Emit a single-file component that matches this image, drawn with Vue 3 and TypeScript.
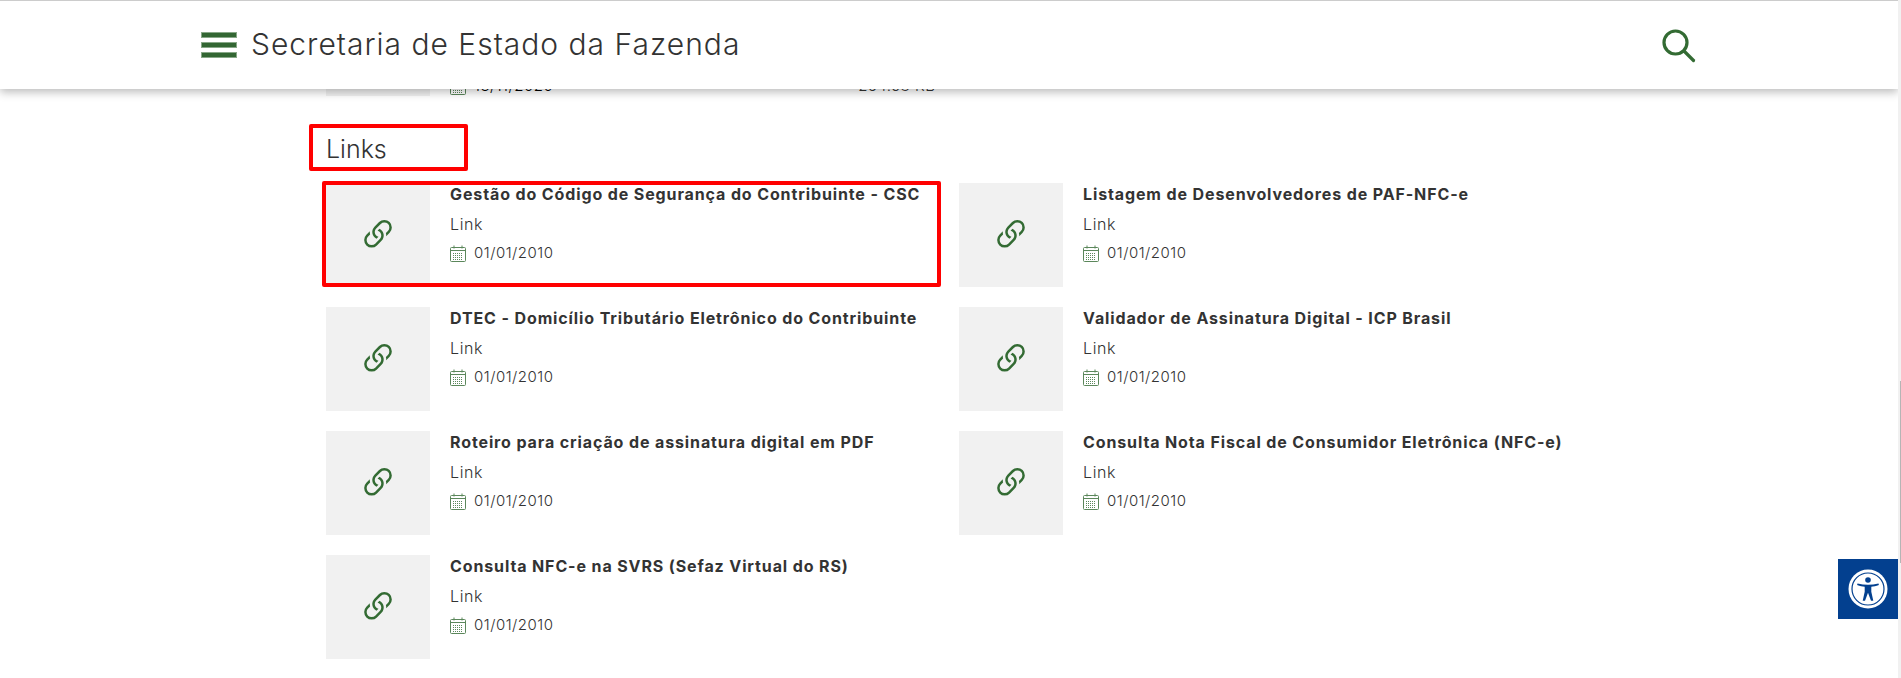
<script setup lang="ts">
const links = [
  'Gestão do Código de Segurança do Contribuinte - CSC',
  'Listagem de Desenvolvedores de PAF-NFC-e',
  'DTEC - Domicílio Tributário Eletrônico do Contribuinte',
  'Validador de Assinatura Digital - ICP Brasil',
  'Roteiro para criação de assinatura digital em PDF',
  'Consulta Nota Fiscal de Consumidor Eletrônica (NFC-e)',
  'Consulta NFC-e na SVRS (Sefaz Virtual do RS)',
]
</script>

<template>
  <div class="page">
    <main class="main">
      <header class="topbar">
        <div class="burger"><span /><span /><span /></div>
        <h1 class="site-title">Secretaria de Estado da Fazenda</h1>
        <svg class="search" width="34" height="34" viewBox="0 0 34 34" fill="none" stroke="#336b33" stroke-linecap="round">
          <circle cx="13.5" cy="13.5" r="11.5" stroke-width="3.2" />
          <path d="M22 22l9.500 9.500" stroke-width="3.2" />
        </svg>
      </header>

      <div class="content">
        <!-- linha anterior, quase toda sob o topo -->
        <div class="peek">
          <div class="thumb" />
          <div class="peek-info">
            <div class="date">
              <svg class="cal" width="16" height="17" viewBox="0 0 16 17" fill="none" stroke="#5b875b">
                <rect x="0.5" y="2.5" width="15" height="14" rx="1" />
                <path d="M0.5 5.5h15M4 0.5v3M12 0.5v3" />
                <path d="M3 8.5h10M3 10.5h10M3 12.5h10M3 14.5h10" stroke-dasharray="1 1" />
              </svg>
              13/11/2020
            </div>
            <span class="size">254.68 KB</span>
          </div>
        </div>

        <h2 class="section-title">Links</h2>

        <div class="grid">
          <a v-for="(title, i) in links" :key="title" class="card" :class="{ marked: i === 0 }">
            <div class="thumb">
              <svg width="40" height="40" viewBox="0 0 16 16" fill="#336b33">
                <path d="M4.715 6.542 3.343 7.914a3 3 0 1 0 4.243 4.243l1.828-1.829A3 3 0 0 0 8.586 5.500L8 6.086a1 1 0 0 0-.154.199 2 2 0 0 1 .861 3.337L6.880 11.450a2 2 0 1 1-2.830-2.830l.793-.792a4 4 0 0 1-.128-1.287z" />
                <path d="M6.586 4.672A3 3 0 0 0 7.414 9.500l.775-.776a2 2 0 0 1-.896-3.346L9.120 3.550a2 2 0 1 1 2.830 2.830l-.793.792c.112.420.155.855.128 1.287l1.372-1.372a3 3 0 1 0-4.243-4.243z" />
              </svg>
            </div>
            <div class="info">
              <div class="title">{{ title }}</div>
              <div class="type">Link</div>
              <div class="date">
                <svg class="cal" width="16" height="17" viewBox="0 0 16 17" fill="none" stroke="#5b875b">
                  <rect x="0.5" y="2.5" width="15" height="14" rx="1" />
                  <path d="M0.5 5.5h15M4 0.5v3M12 0.5v3" />
                  <path d="M3 8.5h10M3 10.5h10M3 12.5h10M3 14.5h10" stroke-dasharray="1 1" />
                </svg>
                01/01/2010
              </div>
            </div>
          </a>
        </div>
      </div>

      <button class="access" aria-label="Acessibilidade">
        <svg width="40" height="40" viewBox="0 0 40 40">
          <circle cx="20" cy="20" r="19.5" fill="#fff" />
          <circle cx="20" cy="20" r="16" fill="none" stroke="#03408f" stroke-width="1.2" />
          <circle cx="20" cy="11" r="2.8" fill="#03408f" />
          <path d="M9.500 14.500c3.500.8 7 1.200 10.500 1.200s7-.4 10.500-1.200l.4 1.400c-2.900 1-5.400 1.500-7.600 1.800v5l2 9h-2.300l-3-8-3 8h-2.300l2-9v-5c-2.200-.3-4.700-.8-7.600-1.800z" fill="#03408f" />
        </svg>
      </button>
    </main>
    <aside class="scrollbar"><div class="scroll-thumb" /></aside>
  </div>
</template>

<style scoped>
.page {
  display: flex;
  height: 678px;
  overflow: hidden;
  font-family: Inter, "Open Sans", sans-serif;
  background: #fff;
}

.main {
  position: relative;
  flex: 1;
  min-width: 0;
  overflow: hidden;
}

.scrollbar {
  position: relative;
  width: 3px;
  background: #f1f1f1;
}
.scroll-thumb {
  position: absolute;
  top: 381px;
  right: 0;
  width: 1px;
  height: 182px;
  background: #b5b5b5;
}

/* --- topo --- */
.topbar {
  position: absolute;
  top: 0;
  left: 0;
  right: 0;
  z-index: 5;
  box-sizing: border-box;
  height: 89px;
  display: flex;
  align-items: center;
  padding-left: 201px;
  padding-right: 202px;
  background: #fff;
  border-top: 1px solid #ccc;
  box-shadow: 0 3px 9px rgba(0, 0, 0, 0.28);
}

.burger {
  display: flex;
  flex-direction: column;
  gap: 4px;
  width: 36px;
  margin-right: 14px;
}
.burger span {
  box-sizing: border-box;
  height: 6px;
  background: #336633;
  border: 1px solid #88a888;
}

.site-title {
  flex: 1;
  margin: 0 0 2px;
  font-size: 30px;
  font-weight: 300;
  letter-spacing: 1px;
  color: #333;
}

.search {
  margin-top: 2px;
}

/* --- conteudo --- */
.content {
  margin-top: -8px;
  padding-left: 326px;
}

.thumb {
  flex: none;
  display: flex;
  align-items: center;
  justify-content: center;
  width: 104px;
  height: 104px;
  background: #f1f1f1;
}

.peek {
  display: flex;
  height: 104px;
}
.peek-info {
  display: flex;
  align-items: flex-end;
  margin-bottom: -1px;
  padding-left: 20px;
}
.size {
  margin-left: 305px;
  font-size: 15px;
  font-weight: 300;
  letter-spacing: 0.5px;
  line-height: 22px;
  color: #333;
}

.section-title {
  position: relative;
  box-sizing: border-box;
  height: 47px;
  margin: 28px 0 12px;
  font-size: 25px;
  font-weight: 300;
  line-height: 50px;
  color: #333;
}
.section-title::after {
  content: '';
  position: absolute;
  top: 0;
  left: -17px;
  width: 159px;
  height: 47px;
  box-sizing: border-box;
  border: 4px solid #f00;
  border-radius: 2px;
}

.grid {
  display: grid;
  grid-template-columns: 617px 617px;
  column-gap: 16px;
  row-gap: 20px;
}

.card {
  position: relative;
  display: flex;
  height: 104px;
}
.card.marked::after {
  content: '';
  position: absolute;
  top: -2px;
  left: -4px;
  right: 2px;
  bottom: 0;
  border: 4px solid #f00;
  border-radius: 2px;
}

.info {
  min-width: 0;
  padding-left: 20px;
  color: #333;
}
.title {
  font-size: 16px;
  font-weight: 700;
  letter-spacing: 0.88px;
  line-height: 22px;
  white-space: nowrap;
}
.type {
  margin-top: 8px;
  font-size: 16px;
  font-weight: 300;
  letter-spacing: 0.6px;
  line-height: 22px;
}
.date {
  display: flex;
  align-items: center;
  gap: 8px;
  margin-top: 7px;
  font-size: 15px;
  font-weight: 300;
  letter-spacing: 0.5px;
  line-height: 22px;
  white-space: nowrap;
}
.cal {
  flex: none;
}

/* --- acessibilidade --- */
.access {
  position: absolute;
  right: 0;
  top: 559px;
  z-index: 6;
  display: flex;
  align-items: center;
  justify-content: center;
  width: 60px;
  height: 60px;
  padding: 0;
  border: 0;
  background: #03408f;
}
</style>
